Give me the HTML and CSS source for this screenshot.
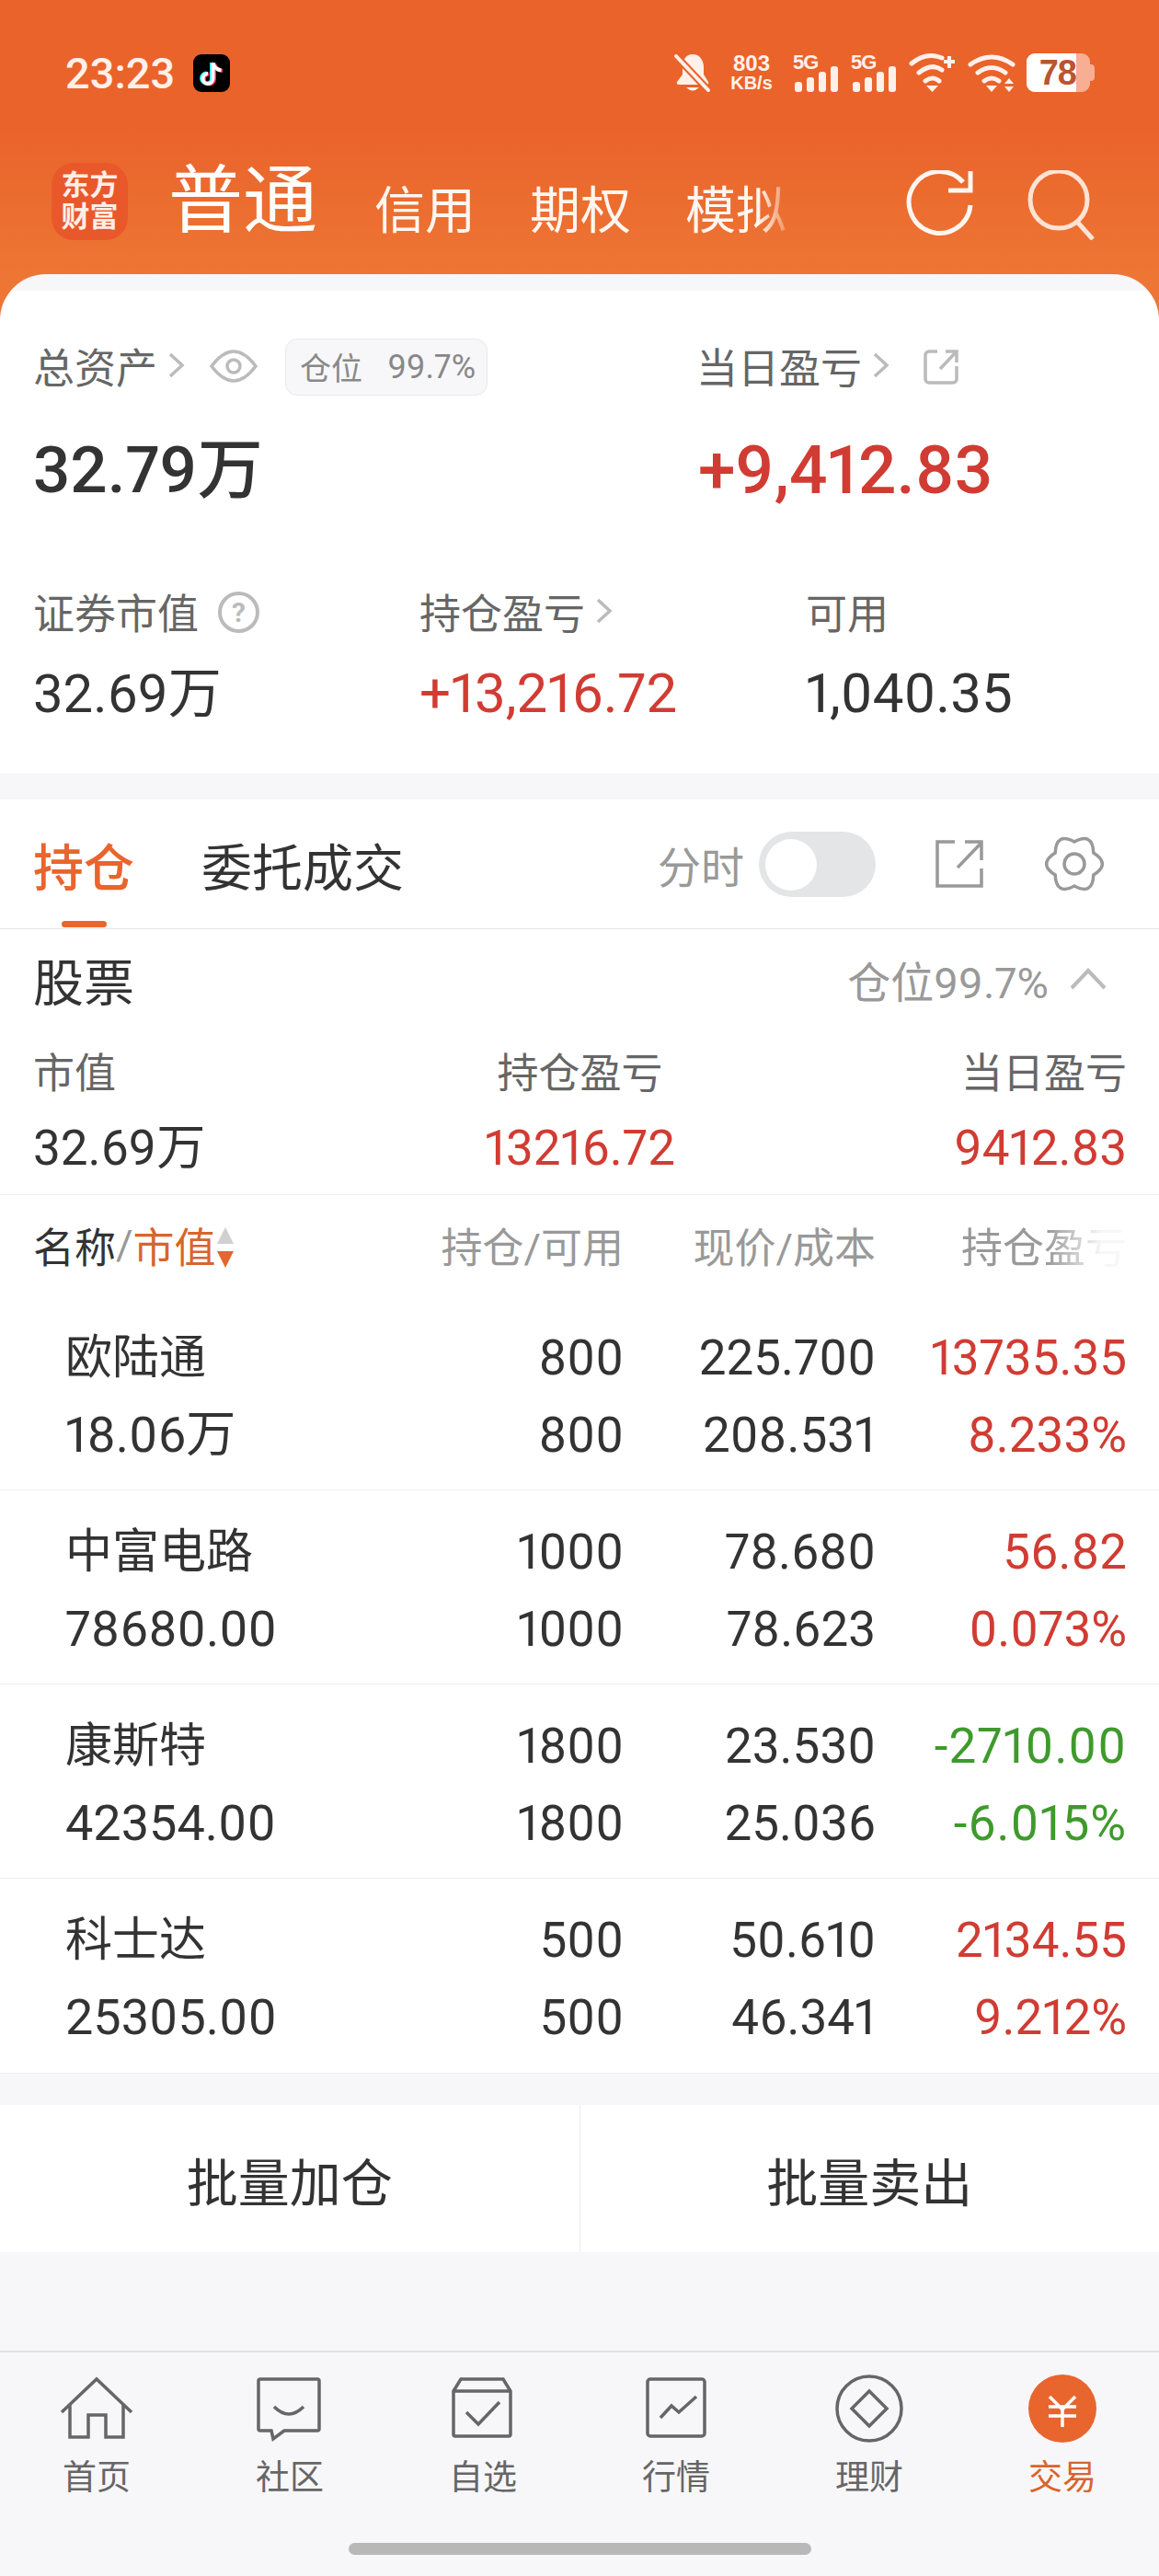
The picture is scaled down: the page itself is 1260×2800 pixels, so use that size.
FILE: index.html
```html
<!DOCTYPE html>
<html lang="zh-CN">
<head>
    <meta charset="UTF-8">
    <meta name="viewport" content="width=device-width, initial-scale=1.0">
    <title>交易</title>
    <link rel="stylesheet" href="styles.css">
</head>
<body>
<div class="app">

    <header class="top">
        <div class="status">
            <div class="status-left">
                <span class="clock">23:23</span>
                <svg class="tiktok" viewBox="0 0 40 41">
                    <rect width="40" height="41" rx="9" fill="#000"/>
                    <g fill="none" stroke-width="4">
                        <path stroke="#25f4ee" d="M20 9v17a5.500 5.500 0 1 1-5.500-5.500M20 9q2 7 9 8"/>
                        <path stroke="#fe2c55" d="M23 10v17a5.500 5.500 0 1 1-5.500-5.500M23 10q2 7 9 8"/>
                        <path stroke="#fff" d="M21.500 9.500v17a5.500 5.500 0 1 1-5.500-5.500M21.500 9.500q2 7 9 8"/>
                    </g>
                </svg>
            </div>
            <div class="status-right">
                <svg class="bell" viewBox="0 0 40 42">
                    <path d="M20 1C12 1 9 8 9 15v8L3 31q-1 3 2 3h30q3 0 2-3l-5-8v-8C32 8 28 1 20 1z" fill="#fff0ea"/>
                    <path d="M13 37q7 7 14 0z" fill="#fff0ea"/>
                    <path d="M2 3l35 37" stroke="#ea632b" stroke-width="8"/>
                    <path d="M2 3l35 37" stroke="#fff0ea" stroke-width="4" stroke-linecap="round"/>
                </svg>
                <div class="speed">
                    <span class="speed-num">803</span>
                    <span class="speed-unit">KB/s</span>
                </div>
                <svg class="signal" viewBox="0 0 49 42">
                    <text class="net" x="0" y="17">5G</text>
                    <rect x="2" y="31" width="8" height="11" rx="3"/>
                    <rect x="15" y="26" width="8" height="16" rx="3"/>
                    <rect x="28" y="20" width="8" height="22" rx="3"/>
                    <rect x="41" y="14" width="8" height="28" rx="3"/>
                </svg>
                <svg class="signal" viewBox="0 0 49 42">
                    <text class="net" x="0" y="17">5G</text>
                    <rect x="2" y="31" width="8" height="11" rx="3"/>
                    <rect x="15" y="26" width="8" height="16" rx="3"/>
                    <rect x="28" y="20" width="8" height="22" rx="3"/>
                    <rect x="41" y="14" width="8" height="28" rx="3"/>
                </svg>
                <svg class="wifi" viewBox="0 0 50 42">
                    <g fill="none" stroke="#fff0ea" stroke-width="5" stroke-linecap="round">
                        <path d="M3 11q16-13 33-6"/>
                        <path d="M11 21q14-11 25-3"/>
                        <path d="M18 30q8-6 15 0"/>
                    </g>
                    <path d="M19 35h13l-6.500 7z" fill="#fff0ea"/>
                    <path d="M44 3v13M38 9h12" stroke="#fff0ea" stroke-width="4"/>
                </svg>
                <svg class="wifi" viewBox="0 0 53 42">
                    <g fill="none" stroke="#fff0ea" stroke-width="5" stroke-linecap="round">
                        <path d="M3 12q23-16 46 0"/>
                        <path d="M11 21q15-11 30 0"/>
                        <path d="M18 30q8-6 16 0"/>
                    </g>
                    <path d="M20 35h12l-6 7z" fill="#fff0ea"/>
                    <path d="M40 33l5-6 5 6zM40 36h10l-5 6z" fill="#fff0ea"/>
                </svg>
                <div class="battery">
                    <div class="battery-fill">78</div>
                </div>
            </div>
        </div>

        <nav class="account-nav">
            <div class="logo"><span>东方</span><span>财富</span></div>
            <span class="nav-main">普通</span>
            <span class="nav-item">信用</span>
            <span class="nav-item">期权</span>
            <span class="nav-item nav-fade">模拟</span>
            <div class="nav-actions">
                <svg class="refresh" viewBox="0 0 76 76">
                    <path d="M70 38A33.500 33.500 0 1 1 62 13" fill="none" stroke="#fff6f1" stroke-width="5"/>
                    <path d="M46 22h24V1" fill="none" stroke="#fff6f1" stroke-width="5"/>
                </svg>
                <svg class="search" viewBox="0 0 76 76">
                    <circle cx="35" cy="32" r="31" fill="none" stroke="#ffe3d4" stroke-width="5"/>
                    <path d="M55 56l17 19" stroke="#ffe3d4" stroke-width="5"/>
                </svg>
            </div>
        </nav>
    </header>

    <section class="summary">
        <div class="summary-top">
            <div class="sum-total">
                <div class="sum-label">
                    总资产
                    <svg class="chev" viewBox="0 0 18 28"><path d="M2 2l13 12L2 26"/></svg>
                    <svg class="eye" viewBox="0 0 52 36">
                        <path d="M2 18Q14 2 26 2t24 16Q38 34 26 34T2 18z"/>
                        <circle cx="26" cy="18" r="7"/>
                    </svg>
                    <span class="ratio-badge"><span>仓位</span><span class="ratio-num">99.7%</span></span>
                </div>
                <div class="sum-big">32.79万</div>
            </div>
            <div>
                <div class="sum-label">
                    当日盈亏
                    <svg class="chev" viewBox="0 0 18 28"><path d="M2 2l13 12L2 26"/></svg>
                    <svg class="share-small" viewBox="0 0 38 38">
                        <path d="M15 2H6a4 4 0 0 0-4 4v26a4 4 0 0 0 4 4h26a4 4 0 0 0 4-4V18"/>
                        <path d="M18 21L35 3M24 2h12v12"/>
                    </svg>
                </div>
                <div class="sum-big up">+9,412.83</div>
            </div>
        </div>
        <div class="summary-sub">
            <div class="sub-cell">
                <div class="sum-label">
                    证券市值
                    <span class="help">?</span>
                </div>
                <div class="sum-mid">32.69万</div>
            </div>
            <div class="sub-cell">
                <div class="sum-label">
                    持仓盈亏
                    <svg class="chev" viewBox="0 0 18 28"><path d="M2 2l13 12L2 26"/></svg>
                </div>
                <div class="sum-mid wide up">+13,216.72</div>
            </div>
            <div class="sub-cell">
                <div class="sum-label">可用</div>
                <div class="sum-mid wide">1,040.35</div>
            </div>
        </div>
    </section>

    <section class="holdings">
        <div class="pos-tabs">
            <span class="pos-tab active">持仓</span>
            <span class="pos-tab">委托成交</span>
            <div class="pos-tools">
                <span class="tool-label">分时</span>
                <span class="switch"><span class="knob"></span></span>
                <svg class="share-big" viewBox="0 0 52 52">
                    <path d="M21 2H2v48h48V31"/>
                    <path d="M24 30L49 4M32 2h18v20"/>
                </svg>
                <svg class="gear" viewBox="0 0 64 64">
                    <path d="M32 8Q12-2.600 11.200 20Q-8 32 11.200 44Q12 66.600 32 56Q52 66.600 52.800 44Q72 32 52.800 20Q52-2.600 32 8z"/>
                    <circle cx="32" cy="32" r="11"/>
                </svg>
            </div>
        </div>

        <div class="stock-head">
            <span class="stock-title">股票</span>
            <div class="stock-ratio">
                <span>仓位99.7%</span>
                <svg class="chev-up" viewBox="0 0 40 24"><path d="M2 22L20 3l18 19"/></svg>
            </div>
        </div>
        <div class="stock-sum">
            <span class="stock-sum-label">市值</span>
            <span class="stock-sum-label center">持仓盈亏</span>
            <span class="stock-sum-label right">当日盈亏</span>
            <span class="stock-sum-value">32.69万</span>
            <span class="stock-sum-value center up">13216.72</span>
            <span class="stock-sum-value right up">9412.83</span>
        </div>

        <div class="table-head">
            <div class="sort-col">
                <span>名称</span><span class="slash">/</span><span class="sort-on">市值</span>
                <svg class="sort-arrows" viewBox="0 0 20 46">
                    <path d="M10 1l9 18H1z" fill="#d0d0d0"/>
                    <path d="M1 27h18l-9 18z" fill="#e3672e"/>
                </svg>
            </div>
            <span class="col-head">持仓/可用</span>
            <span class="col-head">现价/成本</span>
            <span class="col-head head-fade">持仓盈亏</span>
        </div>

        <div class="stock-row">
            <span class="name">欧陆通</span>
            <span class="num">800</span>
            <span class="num">225.700</span>
            <span class="num up">13735.35</span>
            <span class="value">18.06万</span>
            <span class="num">800</span>
            <span class="num">208.531</span>
            <span class="num up">8.233%</span>
        </div>
        <div class="stock-row">
            <span class="name">中富电路</span>
            <span class="num">1000</span>
            <span class="num">78.680</span>
            <span class="num up">56.82</span>
            <span class="value">78680.00</span>
            <span class="num">1000</span>
            <span class="num">78.623</span>
            <span class="num up">0.073%</span>
        </div>
        <div class="stock-row">
            <span class="name">康斯特</span>
            <span class="num">1800</span>
            <span class="num">23.530</span>
            <span class="num down">-2710.00</span>
            <span class="value">42354.00</span>
            <span class="num">1800</span>
            <span class="num">25.036</span>
            <span class="num down">-6.015%</span>
        </div>
        <div class="stock-row">
            <span class="name">科士达</span>
            <span class="num">500</span>
            <span class="num">50.610</span>
            <span class="num up">2134.55</span>
            <span class="value">25305.00</span>
            <span class="num">500</span>
            <span class="num">46.341</span>
            <span class="num up">9.212%</span>
        </div>
    </section>

    <div class="batch">
        <span class="batch-btn">批量加仓</span>
        <span class="batch-btn">批量卖出</span>
    </div>

    <footer class="tabbar">
        <div class="tabs">
            <div class="tab">
                <svg class="tab-icon" viewBox="0 0 80 70">
                    <path d="M2 39L40 3l38 36M11 31v35h20V42h19v24h19V31"/>
                </svg>
                <span>首页</span>
            </div>
            <div class="tab">
                <svg class="tab-icon" viewBox="0 0 80 70">
                    <path d="M8 3h62a2 2 0 0 1 2 2v52a2 2 0 0 1-2 2H34l-12 9-2-9H8a2 2 0 0 1-2-2V5a2 2 0 0 1 2-2z"/>
                    <path d="M23 33q16 16 32 0"/>
                </svg>
                <span>社区</span>
            </div>
            <div class="tab">
                <svg class="tab-icon" viewBox="0 0 80 70">
                    <path d="M8 16L16 3h46l8 13v47a2 2 0 0 1-2 2H10a2 2 0 0 1-2-2zM8 16h62"/>
                    <path d="M22 39l13 13 23-24"/>
                </svg>
                <span>自选</span>
            </div>
            <div class="tab">
                <svg class="tab-icon" viewBox="0 0 80 70">
                    <rect x="9" y="3" width="62" height="62" rx="3"/>
                    <path d="M23 45l12-13 8 7 19-17"/>
                </svg>
                <span>行情</span>
            </div>
            <div class="tab">
                <svg class="tab-icon" viewBox="0 0 80 70">
                    <circle cx="40" cy="35" r="35"/>
                    <path d="M40 16l19 19-19 19-19-19z"/>
                </svg>
                <span>理财</span>
            </div>
            <div class="tab tab-active">
                <svg class="tab-icon" viewBox="0 0 80 74">
                    <circle class="coin" cx="40" cy="37" r="37"/>
                    <path class="coin-mark" d="M26 24l14 14 14-14M25 35h30M25 45h30M40 35v22"/>
                </svg>
                <span>交易</span>
            </div>
        </div>
        <div class="home-bar"></div>
    </footer>
</div>
</body>
</html>
```

FILE: styles.css
```css
* {
    box-sizing: border-box;
}
body {
    margin: 0;
    font-family: Roboto, "Noto Sans CJK SC", sans-serif;
    font-variant-numeric: proportional-nums;
    color: #333;
}
.app {
    width: 1260px;
    height: 2800px;
    display: flex;
    flex-direction: column;
    overflow: hidden;
    background: #f7f7f9;
}
.up {
    color: #d03c33;
}
.down {
    color: #3f9a2c;
    letter-spacing: 1px;
}

/* orange header, runs on behind the rounded corners of the card */
.top {
    height: 348px;
    margin-bottom: -50px;
    background: linear-gradient(#ea632b 0, #ea632b 140px, #ed7634 298px);
}
.status {
    height: 100px;
    padding: 58px 75px 0 71px;
    display: flex;
    justify-content: space-between;
    color: #fff0ea;
}
.status-left {
    display: flex;
    align-items: center;
    height: 42px;
    gap: 20px;
}
.clock {
    font-size: 47px;
    font-weight: 500;
}
.tiktok {
    width: 40px;
    height: 41px;
}
.status-right {
    display: flex;
    height: 42px;
}
.bell {
    width: 40px;
    height: 42px;
    margin-right: 18px;
}
.speed {
    width: 52px;
    margin-right: 19px;
    display: flex;
    flex-direction: column;
    align-items: center;
    justify-content: space-between;
    font-weight: 700;
    font-family: "Liberation Sans", sans-serif;
}
.speed-num {
    font-size: 24px;
    line-height: 21px;
}
.speed-unit {
    font-size: 20px;
    line-height: 19px;
}
.signal {
    width: 49px;
    height: 42px;
    margin-right: 14px;
    fill: #fff0ea;
    overflow: visible;
}
.net {
    font-family: "Liberation Sans", sans-serif;
    font-weight: 700;
    font-size: 22px;
    letter-spacing: -1px;
}
.wifi {
    width: 50px;
    height: 42px;
    margin-right: 14px;
}
.wifi + .wifi {
    width: 53px;
    margin-right: 11px;
}
.battery {
    position: relative;
    width: 69px;
    height: 42px;
    background: #f7ae93;
    border-radius: 9px;
}
.battery::after {
    content: "";
    position: absolute;
    right: -5px;
    top: 12px;
    width: 5px;
    height: 18px;
    border-radius: 0 4px 4px 0;
    background: #f7ae93;
}
.battery-fill {
    width: 54px;
    height: 42px;
    background: #fff;
    border-radius: 9px 0 0 9px;
    color: #ba5530;
    font-size: 38px;
    font-weight: 700;
    line-height: 42px;
    text-align: right;
    letter-spacing: -1px;
    font-family: "Liberation Sans", sans-serif;
}
.account-nav {
    height: 198px;
    padding: 77px 68px 37px 56px;
    display: flex;
    align-items: flex-end;
    color: #fff;
}
.logo {
    width: 83px;
    height: 84px;
    background: #e9582a;
    border-radius: 24px;
    display: flex;
    flex-direction: column;
    align-items: center;
    justify-content: center;
    font-size: 31px;
    line-height: 34px;
    font-weight: 700;
    color: #ffeee6;
    margin-right: 44px;
}
.nav-main {
    font-size: 81px;
    line-height: 84px;
    margin-right: 62px;
    padding-top: 2px;
}
.nav-item {
    font-size: 55px;
    line-height: 64px;
    margin-right: 59px;
    color: #fff6f1;
}
.nav-fade {
    margin-right: 0;
    -webkit-mask-image: linear-gradient(to right, #000 72%, rgba(0,0,0,.25) 100%);
    mask-image: linear-gradient(to right, #000 72%, rgba(0,0,0,.25) 100%);
}
.nav-actions {
    margin-left: auto;
    display: flex;
    gap: 55px;
}
.refresh,
.search {
    width: 76px;
    height: 76px;
}

/* account summary card */
.summary {
    position: relative;
    flex: none;
    height: 543px;
    padding: 67px 0 0 36px;
    border-radius: 50px 50px 0 0;
    background: linear-gradient(#f7f7f9 18px, #fff 18px);
}
.summary-top {
    display: flex;
}
.sum-total {
    width: 721px;
}
.sum-label {
    height: 64px;
    display: flex;
    align-items: center;
    font-size: 45px;
    color: #666;
}
.chev {
    width: 18px;
    height: 28px;
    margin-left: 12px;
    fill: none;
    stroke: #bbb;
    stroke-width: 3.500;
}
.eye {
    width: 52px;
    height: 36px;
    margin: 2px 0 0 27px;
    fill: none;
    stroke: #bbb;
    stroke-width: 3.500;
}
.ratio-badge {
    width: 220px;
    height: 62px;
    margin: 3px 0 0 30px;
    padding: 0 12px 0 15px;
    display: flex;
    justify-content: space-between;
    align-items: center;
    background: #f7f7f9;
    border: 1px solid #e9e9ec;
    border-radius: 13px;
    font-size: 34px;
    color: #888;
}
.ratio-num {
    font-size: 36px;
}
.share-small {
    width: 38px;
    height: 38px;
    margin: 3px 0 0 37px;
    fill: none;
    stroke: #bbb;
    stroke-width: 3.500;
}
.sum-big {
    margin-top: 37px;
    height: 90px;
    line-height: 90px;
    font-size: 71px;
    font-weight: 500;
}
.sum-big.up {
    font-size: 73px;
    padding-left: 2px;
}
.summary-sub {
    margin-top: 76px;
    display: flex;
}
.sub-cell {
    flex: none;
    width: 420px;
}
.help {
    width: 45px;
    height: 45px;
    margin: 2px 0 0 21px;
    border: 4px solid #bbb;
    border-radius: 50%;
    display: flex;
    align-items: center;
    justify-content: center;
    font-size: 30px;
    font-weight: 700;
    color: #bbb;
}
.sum-mid {
    margin-top: 18px;
    height: 80px;
    line-height: 80px;
    font-size: 58px;
}
.sum-mid.wide {
    font-size: 60px;
}

/* holdings list */
.holdings {
    margin-top: 28px;
    background: #fff;
    border-bottom: 1px solid #eee;
}
.pos-tabs {
    height: 141px;
    padding: 0 60px 0 36px;
    display: flex;
    align-items: center;
    border-bottom: 1px solid #e5e5e5;
}
.pos-tab {
    position: relative;
    font-size: 55px;
    margin-right: 73px;
}
.pos-tab.active {
    color: #e8652e;
    font-weight: 500;
}
.pos-tab.active::after {
    content: "";
    position: absolute;
    left: 31px;
    bottom: -29px;
    width: 49px;
    height: 7px;
    border-radius: 4px;
    background: #e8652e;
}
.pos-tools {
    margin-left: auto;
    display: flex;
    align-items: center;
}
.tool-label {
    font-size: 47px;
    color: #999;
}
.switch {
    width: 127px;
    height: 71px;
    margin-left: 16px;
    padding: 8px 7px;
    background: #e4e5e7;
    border-radius: 36px;
}
.knob {
    display: block;
    width: 56px;
    height: 56px;
    background: #fff;
    border-radius: 50%;
}
.share-big {
    width: 52px;
    height: 52px;
    margin-left: 65px;
    fill: none;
    stroke: #999;
    stroke-width: 3.500;
}
.gear {
    width: 64px;
    height: 64px;
    margin-left: 67px;
    fill: none;
    stroke: #999;
    stroke-width: 3.500;
}
.stock-head {
    height: 114px;
    padding: 0 57px 6px 36px;
    display: flex;
    justify-content: space-between;
    align-items: center;
}
.stock-title {
    font-size: 55px;
}
.stock-ratio {
    display: flex;
    align-items: center;
    font-size: 47px;
    color: #999;
}
.chev-up {
    width: 40px;
    height: 24px;
    margin-left: 23px;
    fill: none;
    stroke: #bbb;
    stroke-width: 4;
}
.stock-sum {
    height: 175px;
    padding: 0 35px 17px 36px;
    display: grid;
    grid-template-columns: 1fr 1fr 1fr;
    grid-template-rows: 88px 72px;
    border-bottom: 1px solid #eee;
    align-items: center;
}
.stock-sum-label {
    font-size: 45px;
    line-height: 60px;
    color: #666;
}
.stock-sum-value {
    font-size: 53px;
    line-height: 72px;
}
.center {
    text-align: center;
}
.right {
    text-align: right;
}
.table-head {
    height: 110px;
    padding: 0 35px 1px 36px;
    display: grid;
    grid-template-columns: 335px 307px 274px 273px;
    align-items: center;
    font-size: 45px;
}
.sort-col {
    display: flex;
    align-items: center;
}
.slash {
    color: #999;
}
.sort-on {
    color: #d9642c;
}
.sort-arrows {
    width: 20px;
    height: 46px;
    margin-top: 4px;
}
.col-head {
    text-align: right;
    color: #999;
}
.head-fade {
    -webkit-mask-image: linear-gradient(to right, #000 68%, rgba(0,0,0,.08) 90%);
    mask-image: linear-gradient(to right, #000 68%, rgba(0,0,0,.08) 90%);
}
.stock-row {
    height: 211px;
    padding: 25px 35px 0 71px;
    display: grid;
    grid-template-columns: 300px 307px 274px 273px;
    grid-auto-rows: 84px;
    align-items: center;
    border-bottom: 1px solid #eee;
}
.stock-row:last-child {
    border-bottom: 0;
}
.name {
    font-size: 51px;
    line-height: 70px;
}
.value {
    font-size: 54px;
    line-height: 70px;
    white-space: nowrap;
}
.num {
    font-size: 53px;
    line-height: 70px;
    text-align: right;
}

/* batch actions */
.batch {
    margin-top: 34px;
    height: 160px;
    display: flex;
    background: #fff;
}
.batch-btn {
    flex: 1;
    display: flex;
    align-items: center;
    justify-content: center;
    font-size: 56px;
}
.batch-btn:first-child {
    border-right: 1px solid #eee;
}

/* bottom navigation */
.tabbar {
    margin-top: auto;
    height: 245px;
    border-top: 2px solid #e2e2e6;
    background: #f7f7f9;
}
.tabs {
    height: 207px;
    padding-top: 24px;
    display: flex;
}
.tab {
    width: 210px;
    display: flex;
    flex-direction: column;
    align-items: center;
    font-size: 37px;
    color: #666;
}
.tab span {
    margin-top: 15px;
    line-height: 48px;
}
.tab-icon {
    width: 80px;
    height: 74px;
    fill: none;
    stroke: #666;
    stroke-width: 3.500;
}
.tab-active {
    color: #d9642c;
}
.coin {
    fill: #e9652e;
    stroke: none;
}
.coin-mark {
    stroke: #fff;
}
.home-bar {
    width: 503px;
    height: 13px;
    margin: 0 auto;
    border-radius: 7px;
    background: #b8b8b8;
}
```
